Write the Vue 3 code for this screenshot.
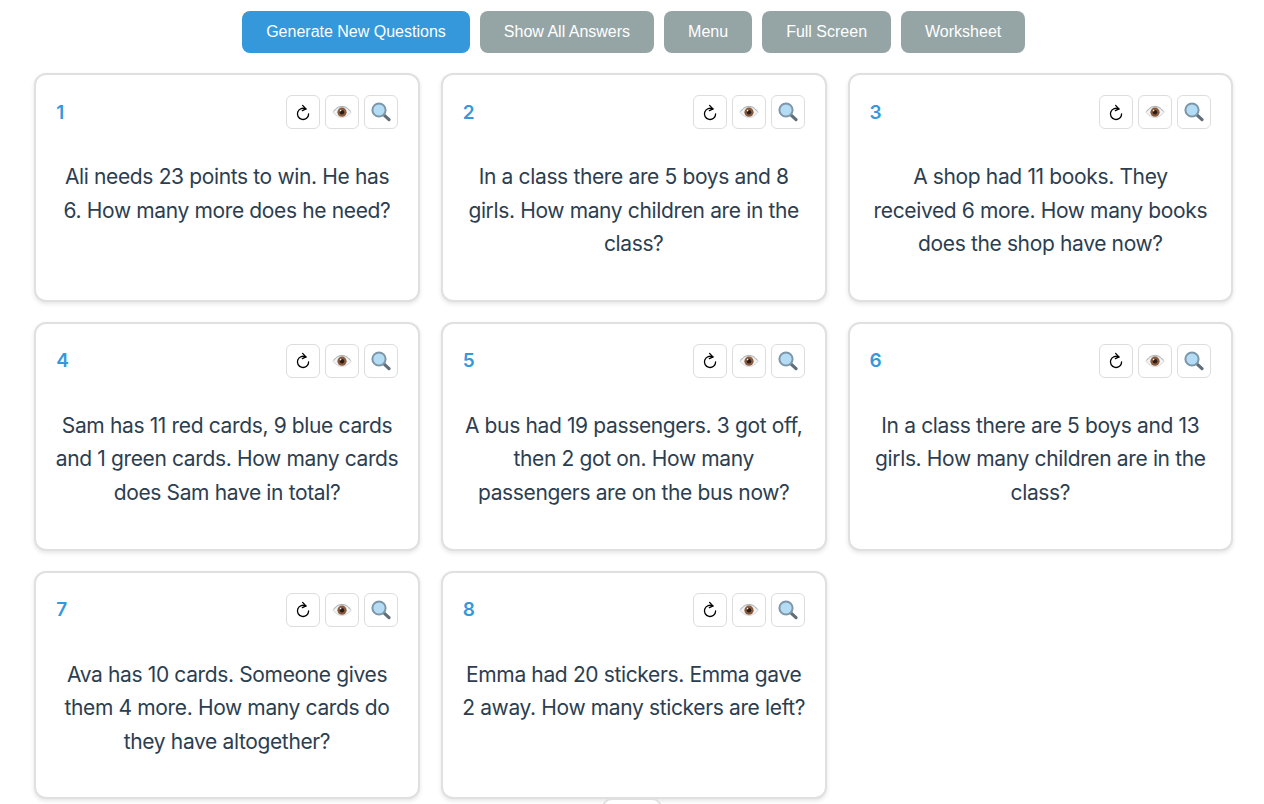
<script setup>
const buttons = ['Generate New Questions', 'Show All Answers', 'Menu', 'Full Screen', 'Worksheet']

const questions = [
  'Ali needs 23 points to win. He has 6. How many more does he need?',
  'In a class there are 5 boys and 8 girls. How many children are in the class?',
  'A shop had 11 books. They\nreceived 6 more. How many books does the shop have now?',
  'Sam has 11 red cards, 9 blue cards and 1 green cards. How many cards does Sam have in total?',
  'A bus had 19 passengers. 3 got off, then 2 got on. How many passengers are on the bus now?',
  'In a class there are 5 boys and 13 girls. How many children are in the class?',
  'Ava has 10 cards. Someone gives them 4 more. How many cards do they have altogether?',
  'Emma had 20 stickers. Emma gave 2 away. How many stickers are left?'
]
</script>

<template>
  <div class="page">
    <div class="toolbar">
      <button v-for="(b, i) in buttons" :key="b" class="tool-btn" :class="{ primary: i === 0 }">{{ b }}</button>
    </div>
    <div class="grid">
      <div v-for="(q, i) in questions" :key="i" class="card">
        <div class="card-head">
          <span class="num">{{ i + 1 }}</span>
          <div class="actions">
            <button class="icon-btn">
              <svg width="16" height="17" viewBox="0 0 16 17" fill="none">
                <path d="M10.9 5.1A5.6 5.6 0 1 0 13.6 9.9" stroke="#000" stroke-width="1.3" stroke-linecap="round"/>
                <path d="M7.6 1.4 11 4.9 7.4 6.6" stroke="#000" stroke-width="1.3" stroke-linejoin="round" stroke-linecap="round"/>
              </svg>
            </button>
            <button class="icon-btn">
              <svg width="20" height="14" viewBox="0 0 20 14">
                <path d="M1 7.4C4 3.4 7 2.2 10 2.2S16 3.4 19 7.4C16 11 13 12.4 10 12.4S4 11 1 7.4Z" fill="#f1f3f4" stroke="#c4c8cb" stroke-width="0.7"/>
                <path d="M1.4 6.4C4.4 2.6 7 1.4 10 1.4S15.6 2.6 18.6 6.4" fill="none" stroke="#8d9296" stroke-width="0.7"/>
                <circle cx="10" cy="7.2" r="4.6" fill="#8a5a3c"/>
                <circle cx="10" cy="7.2" r="2.2" fill="#2a1c14"/>
                <circle cx="8.6" cy="5.6" r="0.8" fill="#fff"/>
              </svg>
            </button>
            <button class="icon-btn">
              <svg width="20" height="20" viewBox="0 0 20 20">
                <path d="M12.6 12.6 18 17.6" stroke="#5f6e78" stroke-width="3.2" stroke-linecap="round"/>
                <circle cx="8" cy="8" r="6.6" fill="#b5dcf5" stroke="#7d97a8" stroke-width="2"/>
              </svg>
            </button>
          </div>
        </div>
        <p class="question">{{ q }}</p>
      </div>
    </div>
    <div class="peek"></div>
  </div>
</template>

<style>
html, body {
  margin: 0;
  background: #fff;
  overflow: hidden;
}
</style>

<style scoped>
.page {
  height: 804px;
  overflow: hidden;
  padding: 0 30.8px 0 34.2px;
  font-family: Inter, "Liberation Sans", sans-serif;
  position: relative;
}

.toolbar {
  display: flex;
  justify-content: center;
  gap: 10px;
  padding-top: 11px;
  margin-bottom: 20px;
}

.tool-btn {
  height: 42px;
  padding: 0 24px;
  border: none;
  border-radius: 8px;
  background: #95a5a6;
  color: #fff;
  font-family: "Liberation Sans", Arial, sans-serif;
  font-size: 16px;
}

.tool-btn.primary {
  background: #3498db;
}

.grid {
  display: grid;
  grid-template-columns: repeat(3, 1fr);
  gap: 20px 21px;
  grid-auto-rows: 228.8px;
}

.card {
  box-sizing: border-box;
  background: #fff;
  border: 2px solid #e0e0e0;
  border-radius: 12px;
  box-shadow: 0 2px 4px rgba(0, 0, 0, 0.1);
  padding: 20px;
}

.card-head {
  display: flex;
  justify-content: space-between;
  align-items: center;
  height: 34px;
}

.num {
  color: #3498db;
  font-size: 19px;
  font-weight: 600;
}

.actions {
  display: flex;
  gap: 5px;
}

.icon-btn {
  width: 34px;
  height: 34px;
  padding: 0;
  display: flex;
  align-items: center;
  justify-content: center;
  background: #fff;
  border: 1px solid #ddd;
  border-radius: 6px;
}

.question {
  margin: 31px -2px 0;
  color: #2c3e50;
  font-size: 21px;
  line-height: 33.6px;
  letter-spacing: -0.36px;
  text-align: center;
  white-space: pre-line;
}

.peek {
  position: absolute;
  left: 602px;
  top: 798px;
  width: 60px;
  height: 20px;
  box-sizing: border-box;
  background: #fff;
  border: 2px solid #e0e0e0;
  border-radius: 10px 10px 0 0;
}
</style>
